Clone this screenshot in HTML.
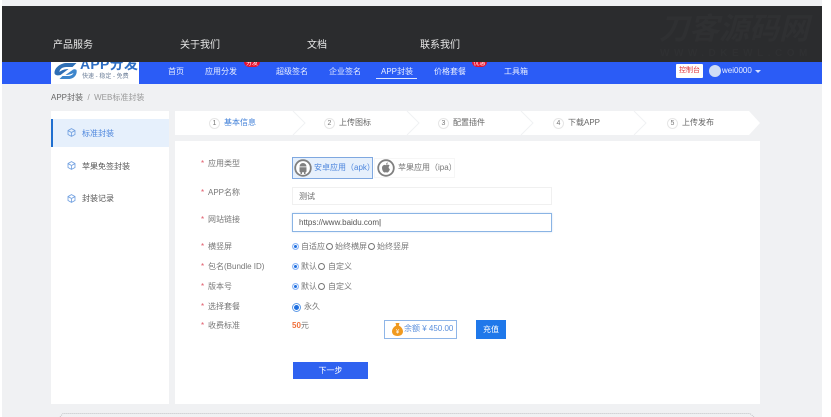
<!DOCTYPE html>
<html lang="zh">
<head>
<meta charset="utf-8">
<style>
html,body{margin:0;padding:0;background:#fff}
body{width:831px;height:417px;overflow:hidden;position:relative;font-family:"Liberation Sans","Noto Sans CJK SC",sans-serif;font-size:8px;color:#666}
#w{position:absolute;left:0;top:0;width:831px;height:417px;filter:blur(.3px)}
.a{position:absolute;white-space:nowrap}
.star{color:#e05a6a;display:inline-block;width:7px}
.lab{color:#777;font-size:8px;line-height:12px;left:201px}
.nav{color:#e8eeff;font-size:8px;line-height:12px;top:66px}
.foot{color:#e8e8e8;font-size:10px;line-height:14px;top:39px}
.step{font-size:8px;line-height:12px;top:117px;color:#666}
.num{display:inline-block;width:9px;height:9px;line-height:9px;border:1px solid #e6e6e6;border-radius:50%;text-align:center;font-size:7px;margin-right:4px;color:#777}
.side{font-size:8px;line-height:12px;color:#555;left:82px}
.ic{position:absolute;left:67px}
.r{position:absolute;width:7px;height:7px;border-radius:50%;box-sizing:border-box;border:1px solid #777;background:#fff}
.r.on{border:1px solid #8fb6f5;background:#1f6fe0;box-shadow:inset 0 0 0 1px #fff}
.t{font-size:8px;line-height:12px;color:#777}
</style>
</head>
<body>
<div id="w">
<div class="a" style="left:2px;top:0;width:820px;height:417px;background:#f0f1f3"></div>
<div class="a" style="left:2px;top:6px;width:820px;height:56px;background:#2b2c2e"></div>
<div class="a foot" style="left:53px">产品服务</div>
<div class="a foot" style="left:180px">关于我们</div>
<div class="a foot" style="left:307px">文档</div>
<div class="a foot" style="left:420px">联系我们</div>
<div class="a" style="left:659px;top:14px;font-size:30px;line-height:32px;font-style:italic;font-weight:bold;color:#2f3032">刀客源码网</div>
<div class="a" style="left:660px;top:48px;font-size:10px;line-height:12px;font-weight:bold;color:#2f3032;letter-spacing:4.500px">WWW.DKEWL.COM</div>

<div class="a" style="left:2px;top:62px;width:820px;height:22px;background:#2b5cf6"></div>
<div class="a" style="left:51px;top:62px;width:88px;height:22px;background:#fff;overflow:hidden">
  <svg class="a" style="left:2px;top:0" width="25" height="21" viewBox="0 0 24 21"><path d="M1 11C1 5 8 1 13 1h10l-4 4h-6c-4 0-7 2-7 5 2-2 6-3 9-3l-8 6c-3 1-6 0-6-2z" fill="#2f6fb5"/><path d="M23 8c1 4-2 9-8 9H6l3-3h5c3 0 5-1 6-3-2 1-5 2-8 2l7-5c1-1 3-1 4 0z" fill="#3d86cc"/></svg>
  <div class="a" style="left:29px;top:-6px;font-size:14px;line-height:16px;font-weight:bold;color:#2f6fc5;letter-spacing:.3px">APP分发</div>
  <div class="a" style="left:31px;top:11px;font-size:6px;line-height:8px;color:#6d7f99">快速 - 稳定 - 免费</div>
</div>
<div class="a nav" style="left:168px">首页</div>
<div class="a nav" style="left:205px">应用分发</div>
<div class="a" style="left:244px;top:62px;width:16px;height:5px;background:#e8112d;border-radius:0 0 5px 5px;color:#fff;font-size:6px;line-height:5px;text-align:center;overflow:hidden">分发</div>
<div class="a nav" style="left:276px">超级签名</div>
<div class="a nav" style="left:329px">企业签名</div>
<div class="a nav" style="left:381px">APP封装</div>
<div class="a" style="left:376px;top:78px;width:41px;height:1px;background:#dfe7ff"></div>
<div class="a nav" style="left:434px">价格套餐</div>
<div class="a" style="left:472px;top:62px;width:15px;height:5px;background:#e8112d;border-radius:0 0 5px 5px;color:#fff;font-size:6px;line-height:5px;text-align:center;overflow:hidden">优惠</div>
<div class="a nav" style="left:504px">工具箱</div>
<div class="a" style="left:676px;top:64px;width:27px;height:14px;background:#fff;border-radius:1px;color:#e0353a;font-size:7px;line-height:14px;text-align:center">控制台</div>
<div class="a" style="left:709px;top:65px;width:12px;height:12px;border-radius:50%;background:#cfdcf5"></div>
<div class="a" style="left:722px;top:65px;font-size:8px;line-height:12px;color:#e8eeff">wei0000</div>
<div class="a" style="left:755px;top:70px;width:0;height:0;border:3px solid transparent;border-top:3px solid #d5e0ff"></div>

<div class="a" style="left:51px;top:92px;font-size:8px;line-height:12px;color:#666">APP封装 <span style="color:#999">&nbsp;/&nbsp; WEB标准封装</span></div>

<div class="a" style="left:51px;top:111px;width:118px;height:293px;background:#fff"></div>
<div class="a" style="left:51px;top:119px;width:118px;height:28px;background:#e6f0fc"></div>
<div class="a" style="left:51px;top:119px;width:2px;height:28px;background:#1f6fd0"></div>
<svg class="ic" style="top:128px" width="9" height="9" viewBox="0 0 9 9" fill="none" stroke="#6f9fe0" stroke-width=".8"><path d="M4.500.6 8 2.500v4L4.500 8.400 1 6.500v-4zM1 2.500l3.500 2 3.500-2M4.500 4.500v3.900"/></svg>
<svg class="ic" style="top:161px" width="9" height="9" viewBox="0 0 9 9" fill="none" stroke="#6f9fe0" stroke-width=".8"><path d="M4.500.6 8 2.500v4L4.500 8.400 1 6.500v-4zM1 2.500l3.500 2 3.500-2M4.500 4.500v3.900"/></svg>
<svg class="ic" style="top:194px" width="9" height="9" viewBox="0 0 9 9" fill="none" stroke="#6f9fe0" stroke-width=".8"><path d="M4.500.6 8 2.500v4L4.500 8.400 1 6.500v-4zM1 2.500l3.500 2 3.500-2M4.500 4.500v3.900"/></svg>
<div class="a side" style="top:128px;color:#4d86dd">标准封装</div>
<div class="a side" style="top:161px">苹果免签封装</div>
<div class="a side" style="top:193px">封装记录</div>

<svg class="a" style="left:175px;top:111px" width="586" height="24" viewBox="0 0 586 24">
<path d="M0 0H574L585 12 574 24H0z" fill="#fff"/>
<path d="M118 0l12 12-12 12M232 0l12 12-12 12M346 0l12 12-12 12M459 0l12 12-12 12" fill="none" stroke="#f0f1f3" stroke-width="1"/>
</svg>
<div class="a step" style="left:209px;color:#3f7fd8"><span class="num">1</span>基本信息</div>
<div class="a step" style="left:324px"><span class="num">2</span>上传图标</div>
<div class="a step" style="left:438px"><span class="num">3</span>配置插件</div>
<div class="a step" style="left:553px"><span class="num">4</span>下载APP</div>
<div class="a step" style="left:667px"><span class="num">5</span>上传发布</div>

<div class="a" style="left:175px;top:141px;width:585px;height:263px;background:#fff"></div>

<div class="a lab" style="top:158px"><span class="star">*</span>应用类型</div>
<div class="a lab" style="top:187px"><span class="star">*</span>APP名称</div>
<div class="a lab" style="top:214px"><span class="star">*</span>网站链接</div>
<div class="a lab" style="top:241px"><span class="star">*</span>横竖屏</div>
<div class="a lab" style="top:261px"><span class="star">*</span>包名(Bundle ID)</div>
<div class="a lab" style="top:281px"><span class="star">*</span>版本号</div>
<div class="a lab" style="top:301px"><span class="star">*</span>选择套餐</div>
<div class="a lab" style="top:320px"><span class="star">*</span>收费标准</div>

<div class="a" style="left:292px;top:157px;width:81px;height:22px;box-sizing:border-box;background:#e6f0fc;border:1px solid #7fa8e0"></div>
<div class="a" style="left:374px;top:158px;width:81px;height:20px;border:1px solid #f6f6f6;box-sizing:border-box"></div>
<svg class="a" style="left:294px;top:159px" width="18" height="18" viewBox="0 0 18 18"><circle cx="9" cy="9" r="7.800" fill="#fff" stroke="#808080" stroke-width="1.800"/><path d="M5.500 7.500a3.500 3.500 0 0 1 7 0zM5.500 8.200h7v4a1 1 0 0 1-1 1v1.800h-1.500v-1.800h-2v1.800H6.500v-1.800a1 1 0 0 1-1-1z" fill="#808080"/></svg>
<svg class="a" style="left:377px;top:159px" width="18" height="18" viewBox="0 0 18 18"><circle cx="9" cy="9" r="7.800" fill="#fff" stroke="#808080" stroke-width="1.800"/><path d="M9 6.200c1-.8 2.600-.8 3.600.4-1.300.9-1.300 2.700.3 3.500-.5 1.800-1.600 3.400-2.700 3.400-.6 0-.8-.3-1.300-.3s-.8.300-1.300.3C6.300 13.500 5 11 5 8.900c0-2.600 2.500-3.600 4-2.700zM9 5.600c0-1.200.9-2 1.800-2.200 0 1.200-.7 2-1.800 2.200z" fill="#808080"/></svg>
<div class="a" style="left:314px;top:162px;font-size:8px;line-height:12px;color:#4d86dd">安卓应用（apk）</div>
<div class="a t" style="left:398px;top:162px">苹果应用（ipa）</div>

<div class="a" style="left:292px;top:187px;width:260px;height:18px;box-sizing:border-box;border:1px solid #f0f0f0"></div>
<div class="a t" style="left:299px;top:191px;color:#666">测试</div>
<div class="a" style="left:292px;top:213px;width:260px;height:19px;box-sizing:border-box;border:1px solid #8ab4e4;box-shadow:0 0 2px #cfe0f5"></div>
<div class="a" style="left:299px;top:217px;font-size:8px;line-height:12px;color:#555">https://www.baidu.com<span style="color:#333">|</span></div>

<div class="r on" style="left:292px;top:243px"></div>
<div class="a t" style="left:301px;top:241px">自适应</div>
<div class="r" style="left:326px;top:243px"></div>
<div class="a t" style="left:335px;top:241px">始终横屏</div>
<div class="r" style="left:368px;top:243px"></div>
<div class="a t" style="left:377px;top:241px">始终竖屏</div>

<div class="r on" style="left:292px;top:263px"></div>
<div class="a t" style="left:301px;top:261px">默认</div>
<div class="r" style="left:318px;top:263px"></div>
<div class="a t" style="left:328px;top:261px">自定义</div>

<div class="r on" style="left:292px;top:283px"></div>
<div class="a t" style="left:301px;top:281px">默认</div>
<div class="r" style="left:318px;top:283px"></div>
<div class="a t" style="left:328px;top:281px">自定义</div>

<div class="a" style="left:292px;top:303px;width:9px;height:9px;box-sizing:border-box;border-radius:50%;border:1px solid #5f9be8;background:#fff"></div>
<div class="a" style="left:294px;top:305px;width:5px;height:5px;border-radius:50%;background:#1f6fe0"></div>
<div class="a t" style="left:304px;top:301px">永久</div>

<div class="a" style="left:292px;top:320px;font-size:8px;line-height:12px;color:#777"><b style="color:#f0703a">50</b>元</div>
<div class="a" style="left:384px;top:320px;width:73px;height:19px;box-sizing:border-box;border:1px solid #8fb6e8"></div>
<svg class="a" style="left:392px;top:323px" width="11" height="13" viewBox="0 0 11 13"><path d="M3.500 0h4L6.800 2.500C9 3.500 11 6 11 8.500 11 11 9 13 5.500 13S0 11 0 8.500C0 6 2 3.500 4.200 2.500z" fill="#f09a20"/><text x="5.500" y="10.500" font-size="6" text-anchor="middle" fill="#fff" font-family="Liberation Sans">¥</text></svg>
<div class="a" style="left:404px;top:323px;font-size:8px;line-height:12px;color:#5a8fdc">余额 ¥ 450.00</div>
<div class="a" style="left:476px;top:320px;width:30px;height:19px;background:#1f78ea;color:#fff;font-size:8px;line-height:19px;text-align:center">充值</div>
<div class="a" style="left:293px;top:362px;width:75px;height:17px;background:#2f62f0;color:#fff;font-size:8px;line-height:17px;text-align:center">下一步</div>

<svg class="a" style="left:58px;top:410px" width="698" height="7" viewBox="0 0 698 7"><path d="M2 7 5 3.500H692L696 7" fill="none" stroke="#c0c2c5" stroke-width="1" stroke-dasharray="1 1"/></svg>
</div>
</body>
</html>
